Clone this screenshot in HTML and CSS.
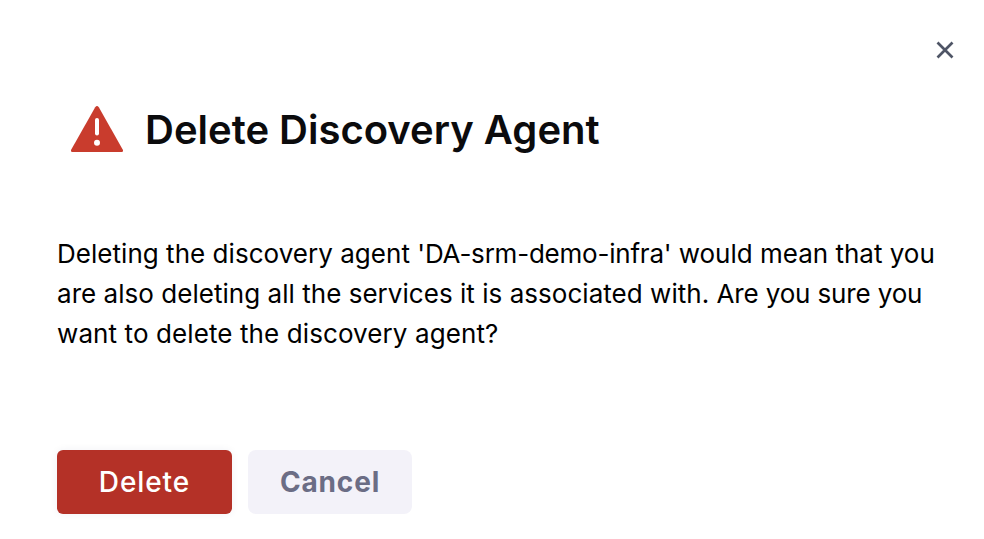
FILE: index.html
```html
<!DOCTYPE html>
<html lang="en">
<head>
<meta charset="utf-8">
<title>Delete Discovery Agent</title>
<link rel="stylesheet" href="styles.css">
</head>
<body>
<main class="dialog" role="dialog" aria-labelledby="title">
  <div class="toolbar">
    <button class="close" aria-label="Close">
      <svg width="18" height="18" viewBox="0 0 18 18"><path d="M1.500 1.500L16.500 16.500M16.500 1.500L1.500 16.500"/></svg>
    </button>
  </div>
  <header class="heading">
    <svg class="warning" width="54" height="48" viewBox="0 0 54 48">
      <path class="warning-shape" d="M25.200 2.200Q27 0 28.800 2.200L52.700 44.500Q53.800 47 51.500 47H2.500Q.2 47 1.300 44.500Z"/>
      <path class="warning-mark" d="M27 15V28.500"/>
      <circle class="warning-dot" cx="27" cy="37.800" r="3"/>
    </svg>
    <h1 class="title" id="title">Delete Discovery Agent</h1>
  </header>
  <p class="message">Deleting the discovery agent <span class="agent-name">'DA-srm-demo-infra'</span> <span class="detail">would mean that you</span> are also deleting all the services it is associated with. <span class="question">Are you sure you</span> <span class="confirm">want to delete the discovery agent?</span></p>
  <footer class="actions">
    <button class="button danger">Delete</button>
    <button class="button secondary">Cancel</button>
  </footer>
</main>
</body>
</html>
```
FILE: styles.css
```css
* { box-sizing: border-box; }
body { margin: 0; background: #fff; font-family: Inter, sans-serif; }
.dialog { display: flex; flex-direction: column; width: 984px; height: 539px; padding: 41px 30px 25px 57px; overflow: hidden; }
.toolbar { display: flex; justify-content: flex-end; height: 18px; }
.close { display: flex; width: 18px; height: 18px; padding: 0; border: 0; background: none; }
.close path { fill: none; stroke: #4f5566; stroke-width: 2.7; }
.heading { display: flex; align-items: center; gap: 21px; height: 50px; margin-top: 45px; padding-left: 13px; }
.warning-shape { fill: #c93c2d; }
.warning-mark { stroke: #fff; stroke-width: 4; stroke-linecap: round; }
.warning-dot { fill: #fff; }
.title { margin: 0; padding-top: 2px; font-size: 40px; line-height: 50px; font-weight: 620; letter-spacing: 0; color: #0b0b0d; white-space: nowrap; }
.message { width: 890px; margin: 80px 0 0; font-size: 26px; line-height: 40px; letter-spacing: 0.035px; color: #000; }
.agent-name { letter-spacing: -0.22px; }
.detail { letter-spacing: 0; }
.question { letter-spacing: -0.15px; }
.confirm { letter-spacing: 0.1px; }
.actions { display: flex; gap: 16px; margin-top: 96px; }
.button { height: 64px; padding: 0; border: 0; border-radius: 6px; font: 500 28px/64px Inter, sans-serif; }
.danger { width: 175px; background: #b43127; color: #fff; font-weight: 450; letter-spacing: 0.9px; box-shadow: 0 0 8px rgba(40, 41, 90, 0.06); }
.secondary { width: 164px; border-radius: 8px; background: #f3f2f9; color: #6b6d85; font-weight: 680; letter-spacing: 0.85px; }
```
